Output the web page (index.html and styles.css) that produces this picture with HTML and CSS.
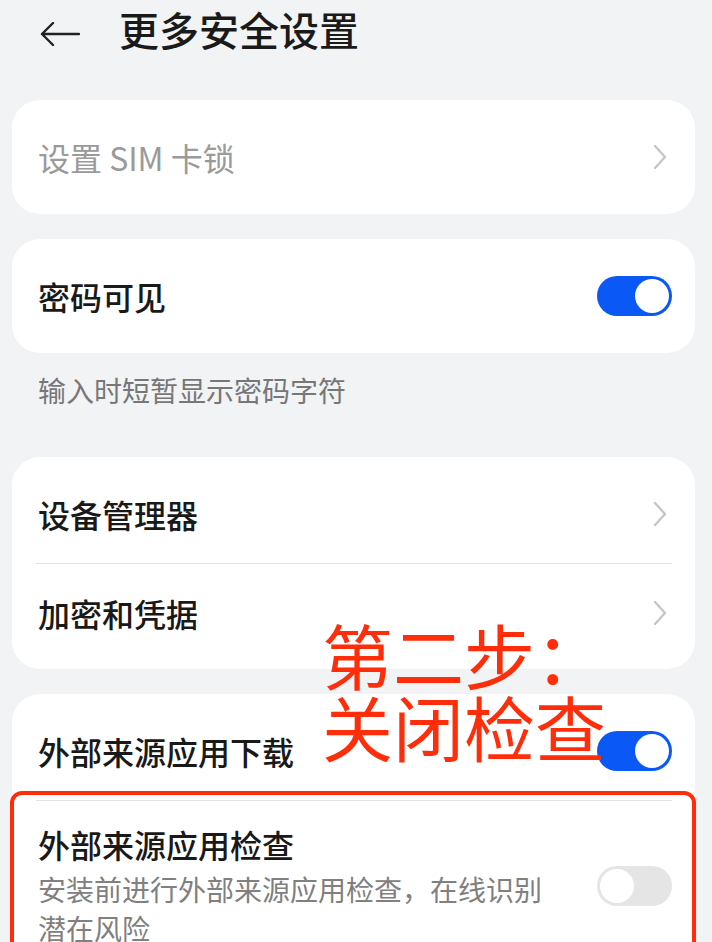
FILE: index.html
```html
<!DOCTYPE html>
<html>
<head>
	<meta charset="utf-8">
	<title>更多安全设置</title>
	<link rel="stylesheet" href="styles.css">
</head>
<body>
	<div class="header">
		<svg class="back" width="40" height="24" viewBox="0 0 40 24">
			<path d="M2 12 H39 M13 1 L2 12 L13 23" fill="none" stroke="#222" stroke-width="2.4" stroke-linecap="round" stroke-linejoin="round"/>
		</svg>
		<h1 class="title">更多安全设置</h1>
	</div>

	<div class="page">
		<div class="card">
			<div class="row">
				<span class="label disabled">设置 SIM 卡锁</span>
				<svg class="chevron" width="14" height="26" viewBox="0 0 14 26"><path d="M2 2 L12 13 L2 24" fill="none" stroke="#c6c6c6" stroke-width="2.4" stroke-linecap="round" stroke-linejoin="round"/></svg>
			</div>
		</div>

		<div class="card gap">
			<div class="row">
				<span class="label">密码可见</span>
				<span class="switch on"><i></i></span>
			</div>
		</div>
		<p class="hint">输入时短暂显示密码字符</p>

		<div class="card">
			<div class="row">
				<span class="label">设备管理器</span>
				<svg class="chevron" width="14" height="26" viewBox="0 0 14 26"><path d="M2 2 L12 13 L2 24" fill="none" stroke="#c6c6c6" stroke-width="2.4" stroke-linecap="round" stroke-linejoin="round"/></svg>
			</div>
			<div class="line"></div>
			<div class="row">
				<span class="label">加密和凭据</span>
				<svg class="chevron" width="14" height="26" viewBox="0 0 14 26"><path d="M2 2 L12 13 L2 24" fill="none" stroke="#c6c6c6" stroke-width="2.4" stroke-linecap="round" stroke-linejoin="round"/></svg>
			</div>
		</div>

		<div class="card gap">
			<div class="row">
				<span class="label">外部来源应用下载</span>
				<span class="switch on"><i></i></span>
			</div>
			<div class="line"></div>
			<div class="row tall">
				<div class="text">
					<span class="label">外部来源应用检查</span>
					<span class="sub">安装前进行外部来源应用检查，在线识别潜在风险</span>
				</div>
				<span class="switch"><i></i></span>
			</div>
		</div>
	</div>

	<div class="mark">第二步：<br>关闭检查</div>
	<div class="frame"></div>
</body>
</html>
```

FILE: styles.css
```css
*{
	margin: 0;
	padding: 0;
	box-sizing: border-box;
}
body{
	background: #f1f3f5;
	font-family: "Noto Sans CJK SC", "Noto Sans", sans-serif;
	color: #1a1a1a;
	position: relative;
	overflow: hidden;
	height: 942px;
}
.header{
	display: flex;
	align-items: center;
	height: 58px;
	padding-left: 40px;
}
.back{
	margin-top: 9px;
	margin-right: 39px;
}
.title{
	font-size: 40px;
	font-weight: 500;
	line-height: 58px;
	color: #1a1a1a;
}
.page{
	padding: 42px 17px 0 12px;
}
.card{
	background: #fff;
	border-radius: 28px;
	padding: 8px 23px 8px 26px;
}
.gap{
	margin-top: 25px;
}
.hint + .card{
	margin-top: 47px;
}
.row{
	display: flex;
	align-items: center;
	justify-content: space-between;
	height: 98px;
}
.card .line + .row{
	height: 97px;
}
.label{
	font-size: 32px;
	font-weight: 500;
	line-height: 40px;
	color: #191919;
}
.disabled{
	color: #9a9a9a;
	font-weight: 400;
}
.chevron{
	margin-right: 5px;
}
.line{
	height: 1px;
	background: #e3e3e3;
	margin-left: -2px;
}
.hint{
	font-size: 28px;
	line-height: 40px;
	color: #777;
	padding: 17px 26px 0;
}
.row.tall{
	height: auto;
	align-items: center;
	padding: 23px 0 10px;
}
.card .line + .row.tall{
	height: auto;
}
.text{
	display: flex;
	flex-direction: column;
	width: 512px;
}
.sub{
	font-size: 28px;
	line-height: 39px;
	color: #808080;
	margin-top: 6px;
}
.switch{
	width: 75px;
	height: 40px;
	border-radius: 20px;
	background: #e5e5e5;
	display: flex;
	align-items: center;
	padding: 0 3px;
	flex-shrink: 0;
}
.switch i{
	width: 34px;
	height: 34px;
	border-radius: 50%;
	background: #fff;
}
.switch.on{
	background: #0a59f7;
	justify-content: flex-end;
}
.mark{
	position: absolute;
	left: 322px;
	top: 617px;
	font-size: 71px;
	line-height: 72px;
	color: #ff2d0a;
	z-index: 2;
}
.frame{
	position: absolute;
	left: 10px;
	top: 791px;
	width: 686px;
	height: 220px;
	border: 4px solid #ff2d0a;
	border-radius: 12px;
	z-index: 2;
}
```
